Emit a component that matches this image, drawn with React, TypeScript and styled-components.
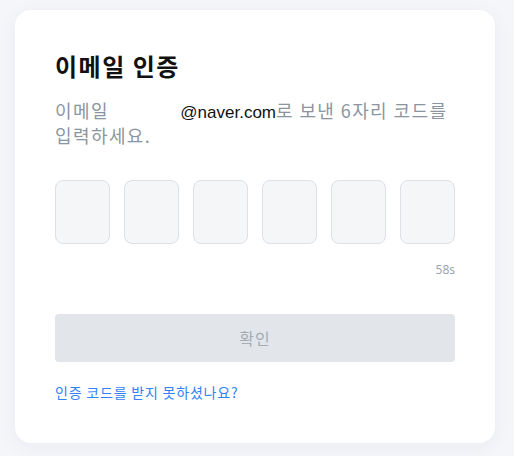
import React from 'react'
import styled, { createGlobalStyle } from 'styled-components'

const GlobalStyle = createGlobalStyle`
  html, body {
    margin: 0;
    padding: 0;
    background: #f5f6fa;
  }
  body {
    font-family: "Noto Sans CJK KR", "Liberation Sans", sans-serif;
  }
  * {
    box-sizing: border-box;
  }
`

const CODE_LENGTH = 6

const App: React.FC = () => {
  return (
    <>
      <GlobalStyle />
      <Page>
        <Card>
          <Title>이메일 인증</Title>
          <Description>
            이메일 <MaskedId />
            <Email>@naver.com</Email>로 보낸 6자리 코드를 입력하세요.
          </Description>
          <CodeRow>
            {Array.from({ length: CODE_LENGTH }).map((_, i) => (
              <CodeBox key={i} maxLength={1} inputMode="numeric" aria-label={`코드 ${i + 1}`} />
            ))}
          </CodeRow>
          <Timer>58s</Timer>
          <ConfirmButton disabled>확인</ConfirmButton>
          <ResendLink href="#">인증 코드를 받지 못하셨나요?</ResendLink>
        </Card>
      </Page>
    </>
  )
}

const Page = styled.div`
  padding: 10px 0 15px 15px;
`

const Card = styled.div`
  width: 480px;
  background: #fff;
  border-radius: 16px;
  padding: 40px 40px 42px;
  box-shadow: 0 4px 20px rgba(30, 40, 80, 0.05);
  display: flex;
  flex-direction: column;
`

const Title = styled.h1`
  margin: 0;
  font-size: 24px;
  line-height: 32px;
  font-weight: 700;
  letter-spacing: 1.5px;
  color: #111;
`

const Description = styled.p`
  margin: 17px 0 0;
  font-size: 18px;
  line-height: 22px;
  letter-spacing: 1.4px;
  word-break: keep-all;
  color: #8b95a1;
`

const MaskedId = styled.span`
  display: inline-block;
  width: 66px;
`

const Email = styled.span`
  font-family: "Liberation Sans", sans-serif;
  font-size: 17px;
  letter-spacing: 0;
  color: #111;
`

const CodeRow = styled.div`
  margin-top: 34px;
  display: grid;
  grid-template-columns: repeat(6, 55px);
  justify-content: space-between;
`

const CodeBox = styled.input`
  width: 55px;
  height: 64px;
  border: 1px solid #dde0e4;
  border-radius: 8px;
  background: #f5f6f8;
  text-align: center;
  font-size: 22px;
  outline: none;
`

const Timer = styled.div`
  margin-top: 18px;
  text-align: right;
  font-family: "Noto Sans", sans-serif;
  font-size: 12px;
  line-height: 16px;
  color: #9aa4b2;
`

const ConfirmButton = styled.button`
  margin-top: 36px;
  height: 48px;
  border: none;
  border-radius: 4px;
  background: #e2e6ea;
  color: #a3abb6;
  font-family: "Noto Sans CJK KR", sans-serif;
  font-size: 16px;
  letter-spacing: 1px;
`

const ResendLink = styled.a`
  margin-top: 21px;
  align-self: flex-start;
  font-size: 14px;
  line-height: 18px;
  letter-spacing: 0.8px;
  color: #3182f6;
  text-decoration: none;
`

export default App
